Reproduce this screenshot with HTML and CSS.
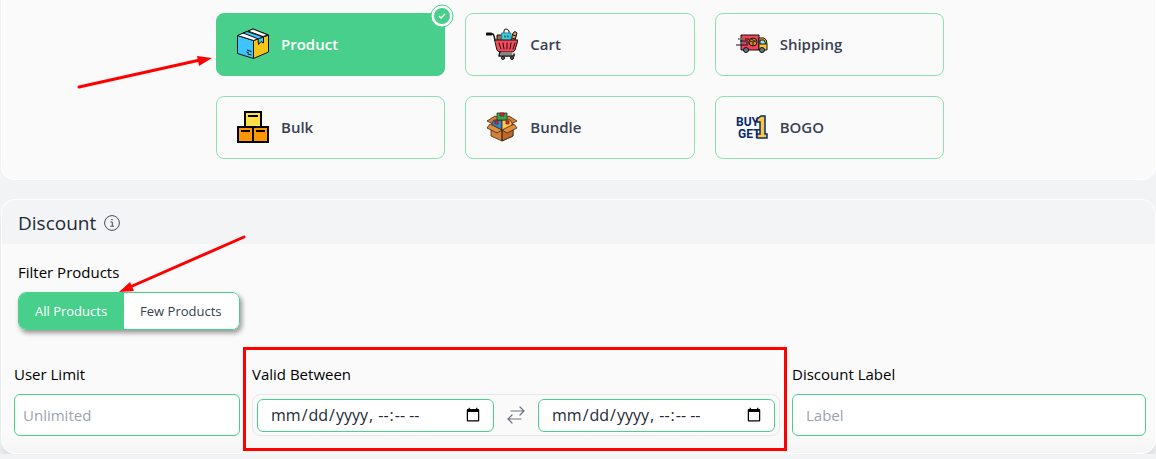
FILE: index.html
```html
<!doctype html>
<html lang="en">

<head>
    <meta charset="UTF-8">
    <meta name="viewport" content="width=device-width, initial-scale=1.0">
    <title>Discount</title>
    <link rel="stylesheet" href="styles.css">
</head>

<body>
    <section class="panel types-panel">
        <div class="types">
            <label class="type active">
                <input type="radio" name="type" value="product" checked>
                <svg class="type-icon" viewBox="0 0 32 32" stroke="#111" stroke-linejoin="round">
                    <path d="M.5 7.5 16.5 12.5V30.5L.5 25.5Z" fill="#40c4ff" />
                    <path d="M16.5 12.5 31.5 7V24L16.5 30.5Z" fill="#f5c518" />
                    <path d="M.5 7.5 16 1 31.5 7 16.5 12.5Z" fill="#fff" />
                    <path d="M6 5 10 3.5 26.5 9 21.5 11Z" fill="#40c4ff" />
                    <path d="M16 1 11 3 26 8.5 31 7Z" fill="#fff" />
                    <path d="M21 11 26.5 9V15L24 13.5 21.5 16.5Z" fill="#40c4ff" />
                    <path d="M10 22 14.5 23.5M10.500 26 14.500 27M9.500 24 12 25" fill="none" />
                </svg>
                <span>Product</span>
                <svg class="badge" viewBox="0 0 24 24">
                    <circle cx="12" cy="12" r="11" fill="#fff" stroke="#49cf8c" />
                    <circle cx="12" cy="12" r="8" fill="#49cf8c" />
                    <path d="m9 12 2 2 4-4" fill="none" stroke="#fff" stroke-width="1.3" />
                </svg>
            </label>
            <label class="type">
                <input type="radio" name="type" value="cart">
                <svg class="type-icon" viewBox="0 0 32 32" stroke="#111" stroke-linejoin="round" stroke-linecap="round">
                    <path d="M11 12V7H16V12Z" fill="#a9653b" />
                    <path d="M25 12 27 5Q29 2 31 5L29 12Z" fill="#e59a56" />
                    <path d="m27 7 3 1m-4 2 3 1" fill="none" />
                    <path d="M18 5V3Q18 1 20 1T23 3V5" fill="none" />
                    <path d="M16 5H25V13H16Z" fill="#3fcbe2" stroke="#21899b" />
                    <path d="M19 8v1m3-1v1" fill="none" />
                    <path d="M9 12H32L29 22Q28 24 26 24H14Q12 24 11 22Z" fill="#f7485c" />
                    <path d="m13 15 2 6m2-6 1 6m3-6v6m4-6-1 6m5-6-2 6" fill="none" />
                    <path d="M1 6H5" fill="none" stroke-width="3" />
                    <path d="M5 6H7Q8 7 9 12M14 24 13 28H28V26" fill="none" stroke-width="1.5" />
                    <path d="M15 26H26" fill="none" />
                    <circle cx="17" cy="30" r="1.5" fill="#777" />
                    <circle cx="26" cy="30" r="1.5" fill="#777" />
                </svg>
                <span>Cart</span>
            </label>
            <label class="type">
                <input type="radio" name="type" value="shipping">
                <svg class="type-icon" viewBox="0 0 32 32" stroke="#111" stroke-linejoin="round">
                    <path d="M5 7H23V22H5Z" fill="#f4425c" />
                    <path d="M23 10H28Q31 11 31 16V22H23Z" fill="#f9c72e" />
                    <path d="M24 12H28L30 16H24Z" fill="#8eeaf0" />
                    <path d="M2 11H13M4 13H12M0 17H12M4 15H14" fill="none" />
                    <path d="M3 11H9M1 15H10" fill="none" stroke="#fff" stroke-width=".5" />
                    <circle cx="17" cy="14" r="4" fill="#d08a30" />
                    <path d="m14 13 3 1 3-1m-3 1v4m-2-7 4 2" fill="none" stroke="#362010" />
                    <circle cx="10" cy="22" r="2.5" fill="#607884" />
                    <circle cx="26" cy="22" r="2.5" fill="#607884" />
                </svg>
                <span>Shipping</span>
            </label>
            <label class="type">
                <input type="radio" name="type" value="bulk">
                <svg class="type-icon" viewBox="0 0 32 32" stroke="#000" stroke-width="2">
                    <path d="M8 1H24V16H8Z" fill="#ffde45" />
                    <path d="M1 16H16V31H1ZM16 16H31V31H16Z" fill="#ff9800" />
                    <path d="M11 5H21M4 20H13M19 20H28" />
                </svg>
                <span>Bulk</span>
            </label>
            <label class="type">
                <input type="radio" name="type" value="bundle">
                <svg class="type-icon" viewBox="0 0 32 32" stroke="#3a2718" stroke-width=".8" stroke-linejoin="round">
                    <path d="M5 15V25L16 30 27 25V15Z" fill="#d58037" />
                    <path d="M16 18 27 13V25L16 30Z" fill="#bd682b" />
                    <path d="M1 10 9 5 16 8 7 13ZM31 10 23 5 16 8 25 13Z" fill="#d58037" />
                    <path d="M6 12 8 9H16V20L6 15Z" fill="#2a87cd" />
                    <path d="M26 12 24 9H16V20L26 15Z" fill="#ffc84b" />
                    <path d="M11 2H21V9H11Z" fill="#2eae4b" />
                    <path d="M14 2H18V5H14ZM9 10H12V13H9ZM20 10H23V13H20Z" fill="#e32636" stroke="#7a1b22" />
                    <path d="M4 13 16 19 11 22 1 17ZM28 13 16 19 21 22 31 17Z" fill="#e58c3d" />
                    <path d="M16 19V30" />
                </svg>
                <span>Bundle</span>
            </label>
            <label class="type">
                <input type="radio" name="type" value="bogo">
                <svg class="type-icon bogo-icon" viewBox="0 0 32 32">
                    <text x="0" y="15">BUY</text>
                    <text x="2" y="27">GET</text>
                    <path d="M21 8 25 5H29V23H31V27H21V23H24V11H21Z" fill="#ffc642" stroke="#062b72" stroke-width="1.5" />
                </svg>
                <span>BOGO</span>
            </label>
        </div>
    </section>

    <section class="panel discount-panel">
        <header class="panel-header">
            <h2>Discount</h2>
            <svg class="info" viewBox="0 0 16 16" fill="none" stroke="#444b55">
                <circle cx="8" cy="8" r="7.4" />
                <path d="M6.5 7H8.3V11M6.3 11.2H10" />
                <circle cx="8" cy="4.7" r=".4" />
            </svg>
        </header>

        <div class="filter">
            <span class="label" id="filter-label">Filter Products</span>
            <div class="toggle" role="group" aria-labelledby="filter-label">
                <button type="button" class="selected" aria-pressed="true">All Products</button>
                <button type="button" aria-pressed="false">Few Products</button>
            </div>
        </div>

        <form class="fields">
            <div class="field">
                <label class="label" for="limit">User Limit</label>
                <input class="text-input" type="text" id="limit" placeholder="Unlimited">
            </div>
            <div class="field marked">
                <label class="label" for="start">Valid Between</label>
                <div class="range">
                    <input type="datetime-local" id="start">
                    <svg class="swap" viewBox="0 0 18 18" fill="none" stroke="#6b7280" stroke-width="1.2" stroke-linecap="round" stroke-linejoin="round">
                        <path d="M4 5H17M13 1 17 5 13 9M14 13H1M5 9 1 13 5 17" />
                    </svg>
                    <input type="datetime-local" id="end" aria-label="Valid until">
                </div>
            </div>
            <div class="field">
                <label class="label" for="discount-label">Discount Label</label>
                <input class="text-input wide-pad" type="text" id="discount-label" placeholder="Label">
            </div>
        </form>
    </section>

    <!-- red pointer arrows over the page -->
    <svg class="arrows" width="260" height="300" viewBox="0 0 260 300" stroke="#f00" stroke-width="3" stroke-linecap="round">
        <path d="M79 87 200 60" />
        <path d="M212 58 197 56 199 66Z" fill="#f00" stroke="none" />
        <path d="M244 237 130 287" />
        <path d="M119 292 130 282 134 291Z" fill="#f00" stroke="none" />
    </svg>
</body>

</html>
```

FILE: styles.css
```css
* {
    box-sizing: border-box;
}

body {
    margin: 0;
    padding-left: 1px;
    position: relative;
    background-color: #f2f3f5;
    font-family: "Open Sans", "Noto Sans", sans-serif;
    font-size: 15px;
    line-height: 20px;
    color: #000;
}

.panel {
    background-color: #fafafa;
    border: 1px solid #fff;
    border-radius: 14px;
}

.types-panel {
    border-top: none;
    border-radius: 0 0 14px 14px;
    padding: 13px 211px 20px 214px;
    margin-bottom: 19px;
}

.types {
    display: grid;
    grid-template-columns: repeat(3, 1fr);
    gap: 20px;
}

.type {
    position: relative;
    display: flex;
    align-items: center;
    gap: 12px;
    min-height: 63px;
    padding: 0 20px 2px;
    border: 1px solid #8fdfb5;
    border-radius: 8px;
    color: #374151;
    font-weight: 600;
    cursor: pointer;
}

.type input {
    position: absolute;
    inset: 0;
    margin: 0;
    opacity: 0;
    cursor: pointer;
}

.type.active {
    background-color: #49cf8c;
    border-color: #49cf8c;
    color: #fff;
}

.type-icon {
    width: 32px;
    height: 32px;
    flex: none;
}

.bogo-icon text {
    font-family: "Liberation Sans Narrow", "Roboto", sans-serif;
    font-weight: 700;
    font-size: 12px;
    fill: #062b72;
}

.badge {
    position: absolute;
    top: -10px;
    right: -10px;
    width: 24px;
    height: 24px;
}

.discount-panel {
    background-image: linear-gradient(to top, #f5f5f6, #fafafa 20px);
    box-shadow: 0 10px 6px #e0e1e3;
    padding-bottom: 17px;
}

.panel-header {
    display: flex;
    align-items: center;
    gap: 8px;
    padding: 9px 16px 7px;
    background-color: #f3f4f6;
    border-radius: 14px 14px 0 0;
}

.panel-header h2 {
    margin: 0;
    font-size: 19px;
    line-height: 28px;
    font-weight: 400;
    color: #1f2937;
}

.info {
    width: 16px;
    height: 16px;
}

.filter {
    padding: 18px 16px 0;
}

.label {
    display: block;
    margin-bottom: 10px;
}

.toggle {
    display: inline-flex;
    height: 38px;
    border: 1px solid #49cf8c;
    border-radius: 8px;
    overflow: hidden;
    box-shadow: 2px 3px 5px rgba(0, 0, 0, 0.4);
    vertical-align: top;
}

.toggle button {
    border: none;
    padding: 0 17px 0 16px;
    background-color: #fff;
    color: #374151;
    font-family: inherit;
    font-size: 13px;
    cursor: pointer;
}

.toggle .selected {
    background-color: #49cf8c;
    color: #fff;
}

.fields {
    display: grid;
    grid-template-columns: minmax(0, 226fr) minmax(0, 528fr) minmax(0, 354fr);
    gap: 12px;
    padding: 34px 9px 0 12px;
}

.text-input {
    width: 100%;
    height: 42px;
    padding: 0 8px;
    border: 1px solid #49cf8c;
    border-radius: 6px;
    background-color: #fff;
    font-family: inherit;
    font-size: 15px;
}

.text-input.wide-pad {
    padding: 0 13px;
}

.text-input::placeholder {
    color: #9ca3af;
}

.marked {
    position: relative;
}

.marked::after {
    content: "";
    position: absolute;
    inset: -17px -7px -15px -9px;
    border: 3px solid #f00;
    pointer-events: none;
}

.range {
    display: flex;
    align-items: center;
    justify-content: space-between;
    gap: 13px;
    height: 42px;
    padding: 0 4px;
    border: 1px solid #e5e7eb;
    border-radius: 8px;
}

.range input {
    flex: 1;
    min-width: 0;
    height: 33px;
    padding: 0 10px 0 12px;
    border: 1px solid #49cf8c;
    border-radius: 6px;
    background-color: #fff;
    color: #1f2937;
    font-family: inherit;
    font-size: 16px;
}

.swap {
    width: 18px;
    height: 18px;
    flex: none;
}

.arrows {
    position: absolute;
    top: 0;
    left: 0;
    pointer-events: none;
}
```
